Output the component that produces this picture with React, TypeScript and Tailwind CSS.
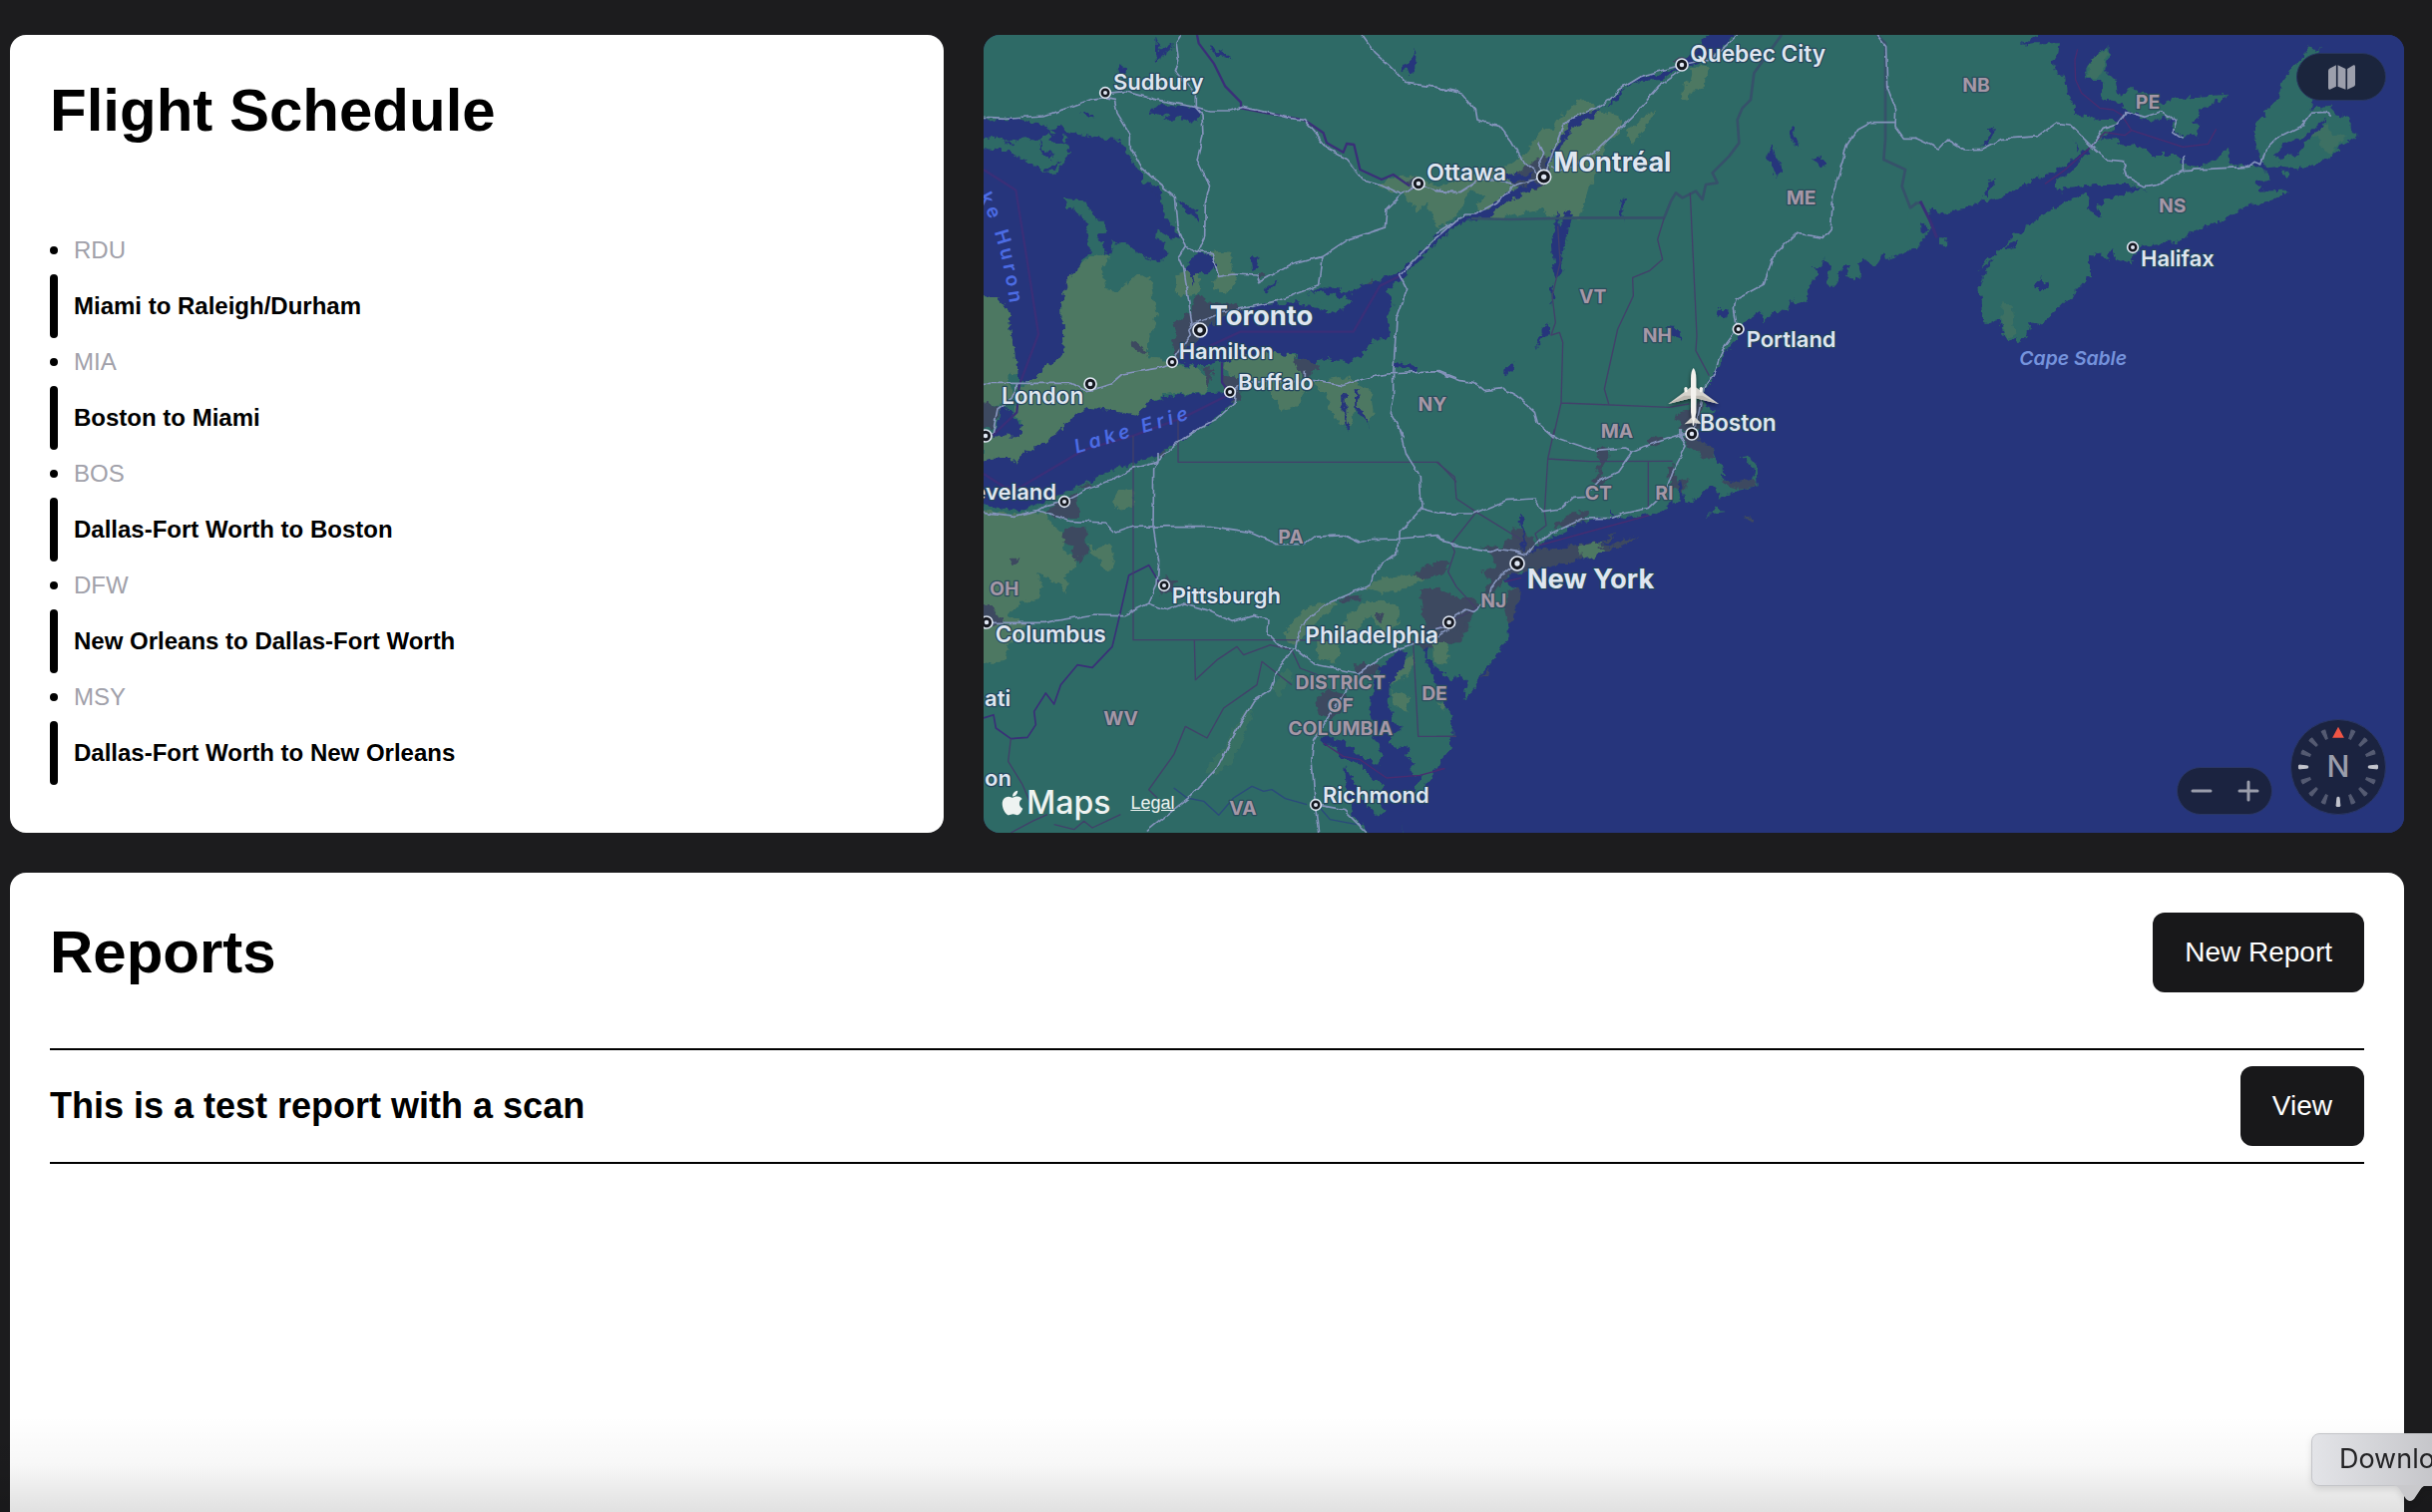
import React from "react";
import { FaApple } from "react-icons/fa";

const legs = [
  { code: "RDU", route: "Miami to Raleigh/Durham" },
  { code: "MIA", route: "Boston to Miami" },
  { code: "BOS", route: "Dallas-Fort Worth to Boston" },
  { code: "DFW", route: "New Orleans to Dallas-Fort Worth" },
  { code: "MSY", route: "Dallas-Fort Worth to New Orleans" },
];

const LAND = "#2e6a66";
const WATER = "#27367b";
const FARM = "#4e7862";
const URBAN = "#3c4a60";

/* The map is drawn in tiles; each tile has its own origin in map units (3 units = 1px). */
const NW = "translate(-18 -15)";
const N = "translate(1362 -15)";
const NE = "translate(2802 -15)";
const SW = "translate(-18 1185)";
const S = "translate(1362 1185)";

function Terrain() {
  return (
    <g filter="url(#coast)">
      <rect x="-60" y="-60" width="4400" height="2520" fill={LAND} />
      <g transform={NW}>
        <path fill={WATER} d="M-40 268 L120 268 L180 280 L215 300 L250 290 L275 310 L330 320 L360 325 L425 330 L440 350 L455 375 L470 410 L495 430 L495 460 L545 470 L550 495 L565 560 L590 590 L610 630 L580 625 L545 605 L540 630 L562 640 L565 680 L545 698 L500 680 L470 660 L445 640 L410 640 L398 675 L385 665 L365 620 L385 600 L380 575 L360 575 L335 540 L325 515 L258 505 L275 530 L320 565 L335 625 L335 670 L310 710 L280 740 L278 780 L255 800 L260 965 L240 990 L205 1010 L190 1030 L160 1055 L130 1055 L115 1030 L100 900 L95 860 L80 830 L60 808 L-40 800 Z" />
        <path fill={LAND} d="M-40 330 L60 320 L75 335 L100 335 L150 322 L165 335 L210 310 L225 340 L250 338 L275 345 L280 375 L260 395 L238 432 L205 425 L150 395 L100 370 L60 358 L-40 350Z M210 296 L240 312 L228 320Z M250 318 L270 322 L262 338Z" />
        <path fill={WATER} d="M185 330 L200 360 L230 375 L222 390 L195 380Z M205 420 L250 390 L240 410 L215 425Z M80 340 L115 345 L100 352Z" />
        <path fill={FARM} d="M-40 800 L60 808 L80 830 L95 860 L100 900 L115 1030 L90 1060 L110 1100 L60 1130 L-40 1120Z" />
        <path fill={FARM} d="M345 680 L385 668 L398 680 L375 720 L385 780 L420 785 L455 760 L475 735 L520 745 L530 820 L540 850 L530 900 L510 930 L510 985 L560 990 L600 1010 L660 1015 L700 1060 L695 1088 L560 1098 L510 1120 L480 1160 L400 1145 L330 1140 L285 1165 L220 1235 L200 1245 L160 1260 L125 1285 L115 1315 L105 1290 L70 1290 L18 1305 L18 1235 L60 1200 L130 1215 L135 1185 L110 1160 L125 1080 L160 1055 L190 1030 L205 1010 L240 990 L260 965 L255 800 L280 740 L310 710Z" />
        <path fill={LAND} d="M95 1025 L115 1060 L90 1055Z" />
        <path fill={WATER} d="M70 1135 L105 1150 L110 1175 L135 1185 L130 1225 L80 1215 L45 1230 L60 1190Z" />
        <path fill={URBAN} d="M-20 1115 L70 1135 L50 1200 L-20 1200Z M457 945 L475 935 L515 975 L490 970Z" />
        <path fill={WATER} d="M600 1000 L600 985 L640 950 L690 900 L720 865 L800 845 L850 825 L960 820 L1000 830 L1080 855 L1110 800 L1160 765 L1270 730 L1330 670 L1440 570 L1450 580 L1330 690 L1280 745 L1230 790 L1255 820 L1230 850 L1240 920 L1190 935 L1150 980 L1110 1000 L1050 990 L1000 1005 L950 975 L850 970 L790 985 L700 1010 L640 1012 Z" />
        <path fill={LAND} d="M1000 815 L1060 800 L1100 800 L1125 820 L1075 852 L1050 830Z" />
        <path fill={WATER} d="M985 795 L1040 775 L1080 778 L1125 795 L1090 805 L1040 785Z M860 785 L905 750 L905 762 L865 792Z M825 675 L850 690 L830 725 L826 700Z" />
        <path fill={URBAN} d="M655 795 L690 820 L780 830 L800 845 L720 865 L690 900 L640 950 L600 990 L580 960 L600 920 L590 880 L640 855Z M850 735 L865 735 L845 755Z M1160 760 L1185 750 L1185 762Z" />
        <path fill={FARM} d="M740 1000 L790 985 L850 970 L940 975 L960 1000 L980 1050 L990 1080 L960 1130 L915 1145 L890 1110 L860 1060 L760 1040 L735 1020Z M1000 1060 L1110 1045 L1180 1080 L1190 1150 L1170 1190 L1140 1130 L1120 1185 L1085 1180 L1055 1130 L1050 1095Z" />
        <path fill={URBAN} d="M950 985 L1020 1000 L1025 1020 L990 1045 L960 1020Z M735 1040 L790 1045 L790 1110 L760 1125 L740 1080Z M680 1015 L710 1020 L695 1082Z" />
        <path fill={WATER} d="M1098 1090 L1110 1090 L1108 1150 L1118 1205 L1108 1195 L1100 1150Z M1136 1075 L1148 1080 L1146 1130 L1180 1190 L1165 1180 L1138 1135Z M1250 998 L1320 1008 L1318 1022 L1260 1015Z" />
        <path fill={FARM} d="M598 735 L640 720 L665 740 L670 790 L600 805Z M700 665 L760 675 L765 720 L780 750 L750 790 L710 780 L715 720Z" />
        <path fill={WATER} d="M620 720 L665 670 L700 675 L715 710 L690 735 L655 735 L650 765 L640 735Z M515 250 L545 222 L600 230 L665 235 L672 262 L640 280 L610 262 L560 275 L575 258Z M415 120 L430 106 L452 120 L440 137Z M535 25 L552 60 L595 45 L558 72 L540 100Z M695 50 L740 65 L762 88 L720 75Z M305 245 L330 242 L352 262 L325 258Z M1265 125 L1290 95 L1305 90 L1318 55 L1318 120 L1300 145 L1292 115Z M600 505 L630 520 L645 540 L670 560 L672 580 L635 555 L610 525Z M525 465 L550 470 L545 510 L530 485Z" />
        <path fill={WATER} d="M220 1232 L285 1165 L330 1140 L400 1145 L480 1160 L510 1120 L560 1105 L640 1095 L700 1092 L750 1090 L775 1110 L770 1125 L700 1180 L640 1220 L560 1265 L520 1290 L450 1305 L330 1360 L250 1395 L175 1432 L120 1445 L50 1435 L-40 1425 L-40 1305 L70 1290 L105 1290 L115 1315 L125 1285 L160 1260 L200 1245Z" />
      </g>

      <g transform={N}>
        <path fill={FARM} d="M-180 470 L-120 440 L-60 440 L0 470 L70 450 L130 430 L160 420 L230 400 L270 370 L320 290 L350 300 L365 270 L440 205 L480 240 L565 265 L550 310 L510 340 L490 400 L460 470 L430 570 L400 550 L370 570 L345 565 L320 540 L170 570 L115 530 L150 500 L100 480 L80 530 L60 560 L0 598 L-10 560 L-30 520 L-60 545 L-90 500 Z M730 185 L760 155 L770 110 L820 115 L800 180 L768 182 L758 215Z M570 300 L660 240 L620 310 L588 345Z" />
        <path fill={URBAN} d="M240 430 L310 380 L340 390 L345 450 L300 480 L240 475 L215 450Z M705 95 L740 80 L770 95 L750 120Z M-90 455 L-60 440 L-45 465 L-70 485Z" />
        <path fill={WATER} d="M835 0 L910 0 L860 55 L790 100 L735 112 L680 150 L620 152 L570 175 L550 210 L500 230 L470 262 L400 300 L390 340 L355 375 L335 410 L330 400 L360 350 L390 300 L420 260 L490 238 L555 190 L580 165 L620 140 L700 125 L760 80Z" />
        <path fill={WATER} d="M-10 622 L80 565 L150 540 L200 500 L240 480 L290 455 L320 465 L260 495 L210 515 L160 565 L90 572 L-10 628Z M200 425 L250 440 L300 425 L290 440 L240 460 L200 450Z" />
        <path fill={WATER} d="M365 540 L372 590 L390 545 L405 550 L395 600 L390 640 L375 680 L382 720 L365 750 L355 740 L345 650 L355 600Z M350 760 L356 780 L348 825 L343 800Z M560 502 L570 505 L558 545 L566 578 L552 550Z M340 875 L335 910 L298 958 L315 910Z M232 1000 L225 1030 L205 1042 L205 1022Z M1062 290 L1072 295 L1092 352 L1072 345Z M1010 345 L1020 380 L1040 415 L1022 448 L1008 410 L990 385Z M1130 382 L1160 388 L1170 412 L1150 405Z M845 840 L872 840 L868 868 L850 862Z M690 890 L725 895 L742 930 L712 920Z M543 1180 L552 1180 L548 1210Z" />
        <path fill={WATER} d="M1460 640 L1420 665 L1350 690 L1345 670 L1320 712 L1280 690 L1265 705 L1275 740 L1250 755 L1235 735 L1245 705 L1220 705 L1210 735 L1200 770 L1180 770 L1180 740 L1185 712 L1170 685 L1160 710 L1130 712 L1150 740 L1120 770 L1115 815 L1085 825 L1065 810 L1055 850 L1020 845 L985 880 L975 850 L920 880 L910 920 L885 950 L860 980 L845 1020 L820 1060 L800 1090 L810 1130 L845 1145 L800 1160 L785 1200 L775 1240 L1480 1240 L1480 620Z" />
      </g>

      <g transform={NE}>
        <rect x="-10" y="-40" width="1560" height="2540" fill={WATER} />
        <path fill={LAND} d="M-20 -40 L440 -40 L365 15 L320 45 L350 40 L435 40 L430 70 L415 95 L425 130 L450 140 L455 190 L480 230 L480 255 L520 258 L560 270 L605 270 L600 300 L560 330 L600 325 L620 345 L690 355 L700 375 L780 375 L805 400 L860 410 L900 390 L945 350 L950 405 L1000 410 L1035 405 L1070 445 L1025 460 L1035 485 L1110 482 L1115 490 L1080 510 L1000 530 L930 570 L830 605 L790 635 L740 640 L680 650 L660 680 L650 700 L600 690 L590 655 L575 690 L555 670 L525 680 L525 740 L480 790 L430 840 L380 885 L345 880 L335 920 L318 940 L300 925 L280 940 L262 900 L255 865 L220 885 L205 865 L200 810 L190 785 L205 735 L240 690 L185 725 L260 655 L300 615 L350 580 L410 538 L515 490 L520 540 L560 565 L550 530 L570 510 L640 490 L690 480 L640 465 L540 465 L450 475 L440 487 L418 475 L425 455 L475 420 L530 355 L500 370 L460 400 L430 420 L370 445 L300 480 L260 505 L225 515 L200 510 L150 540 L80 552 L40 535 L50 600 L0 655 L-20 660Z" />
        <path fill={LAND} d="M1170 80 L1185 50 L1200 60 L1218 50 L1200 80 L1200 180 L1190 240 L1250 230 L1260 255 L1310 265 L1310 300 L1325 322 L1280 345 L1250 385 L1165 417 L1100 410 L1060 415 L1040 395 L1020 320 L1022 290 L1060 240 L1085 210 L1110 150 L1145 100Z" />
        <path fill={LAND} d="M580 45 L582 85 L570 120 L600 150 L605 185 L625 200 L632 175 L665 175 L700 195 L740 225 L780 205 L935 195 L900 220 L850 240 L860 260 L830 270 L850 290 L850 320 L800 322 L775 300 L775 275 L745 260 L710 275 L640 245 L610 215 L560 208 L570 175 L555 150 L515 150 L510 130 L530 90Z M75 625 L92 625 L90 650 L75 640Z M1095 425 L1125 425 L1110 438Z" />
        <path fill={FARM} opacity="0.45" d="M262 820 L290 825 L298 910 L280 935 L262 890Z M1160 320 L1240 280 L1250 310 L1300 320 L1270 345 L1250 375 L1220 360 L1215 320Z M530 90 L575 60 L575 85 L555 140 L515 145Z" />
        <path fill={WATER} d="M1080 380 L1110 340 L1160 330 L1200 290 L1235 262 L1215 300 L1165 350 L1155 370 L1090 388Z M365 755 L380 748 L385 762 L405 758 L400 780 L365 780Z M195 350 L225 320 L222 300 L240 290 L235 325 L215 345Z M205 500 L215 465 L242 445 L225 480 L215 505Z M455 310 L490 345 L485 370 L495 355 L480 335Z M268 655 L310 628 L300 650 L275 665Z M18 580 L30 585 L40 605 L20 610Z" />
      </g>

      <g transform={SW}>
        <path fill={FARM} d="M-40 240 L50 250 L120 255 L200 248 L230 290 L262 320 L255 360 L300 390 L285 430 L262 440 L275 460 L262 500 L250 470 L180 430 L195 470 L180 510 L120 528 L95 560 L150 590 L95 650 L80 700 L30 705 L-40 690Z M405 220 L425 185 L465 175 L475 230 L430 250Z M330 340 L350 365 L400 345 L410 385 L400 425 L375 420 L370 390 L345 385Z" />
        <path fill={FARM} d="M925 620 L940 585 L970 560 L990 535 L1060 520 L1090 530 L1050 555 L1000 600 L960 650 L930 640Z M1160 480 L1200 455 L1300 440 L1350 440 L1300 475 L1220 500Z M1100 580 L1160 520 L1220 518 L1270 540 L1260 590 L1225 620 L1180 560 L1140 610 L1080 630Z M1020 640 L1080 635 L1095 680 L1070 705 L1025 690Z M1230 720 L1310 680 L1315 710 L1270 760 L1235 765Z M1245 790 L1300 805 L1290 850 L1250 830Z M1370 640 L1415 655 L1405 700 L1370 700Z M1380 820 L1410 830 L1400 845Z" />
        <path fill={FARM} opacity="0.35" d="M930 720 L950 740 L900 810 L890 780Z M700 1000 L740 960 L800 850 L830 830 L800 940 L740 1030 L690 1040Z" />
        <path fill={URBAN} d="M200 250 L300 190 L305 270 L250 270Z M-40 530 L45 535 L75 580 L50 595 L-40 600Z M262 300 L325 290 L325 340 L335 370 L315 400 L280 380 L290 355 L255 340Z M100 390 L128 388 L105 412Z M545 460 L560 438 L600 455 L590 485 L550 500Z M540 75 L565 65 L560 85Z M300 180 L340 160 L345 175Z M1015 820 L1050 785 L1110 800 L1100 845 L1060 875 L1025 855Z M1085 510 L1150 498 L1150 520 L1095 520Z M1310 440 L1350 410 L1415 400 L1410 430 L1360 450Z M1130 705 L1220 715 L1180 745 L1140 735Z M1340 560 L1360 510 L1400 490 L1480 520 L1480 600 L1420 650 L1350 660 L1310 640 L1345 610Z M1195 565 L1215 550 L1218 580Z" />
        <path fill={WATER} d="M1265 670 L1290 680 L1280 720 L1240 760 L1235 820 L1250 880 L1275 900 L1250 920 L1230 940 L1270 960 L1300 950 L1290 980 L1310 1000 L1300 1030 L1335 1050 L1300 1120 L1280 1150 L1270 1235 L1190 1235 L1130 1160 L1110 1100 L1105 1015 L1150 1090 L1165 1130 L1210 1170 L1230 1150 L1190 1100 L1220 1080 L1190 1050 L1150 1010 L1090 990 L1075 950 L1040 950 L1040 920 L1100 940 L1150 985 L1210 1010 L1215 970 L1190 920 L1180 850 L1190 770 L1210 720 L1240 690Z" />
      </g>

      <g transform={S}>
        <path fill={URBAN} d="M200 360 L240 300 L265 300 L300 350 L270 400 L250 430 L215 440 L170 500 L140 500 L160 460 L130 430 L175 420 L170 380 L130 350Z M470 165 L490 100 L480 65 L500 45 L520 60 L520 85 L500 110 L490 150 L530 145 L500 165Z M345 300 L390 262 L460 243 L455 270 L400 295Z M630 35 L650 20 L690 30 L640 52Z M745 0 L790 20 L830 55 L835 90 L800 85 L750 45Z M695 110 L720 105 L725 160 L755 150 L745 190 L700 170Z M-50 480 L0 480 L60 510 L110 510 L130 530 L105 570 L70 610 L75 640 L50 640 L60 600 L20 620 L-30 640Z M205 540 L220 480 L250 480 L245 530 L220 600Z M0 400 L40 400 L30 430 L0 450Z M715 -45 L760 -60 L800 -80 L790 0 L735 0Z" />
        <path fill={FARM} d="M-10 645 L25 645 L40 680 L30 710 L-10 700Z" />
        <path fill={WATER} d="M785 0 L790 35 L830 55 L840 95 L860 120 L862 150 L890 165 L940 155 L960 140 L950 105 L915 85 L940 82 L965 115 L968 175 L910 185 L880 195 L870 205 L840 205 L850 190 L828 168 L790 205 L765 220 L745 218 L740 180 L735 150 L728 170 L735 220 L720 230 L705 215 L690 245 L640 258 L560 268 L440 278 L330 335 L290 360 L275 385 L255 400 L260 435 L230 430 L200 460 L248 480 L245 530 L215 600 L215 640 L190 660 L180 685 L130 740 L110 790 L80 815 L90 765 L70 740 L45 755 L0 720 L-28 690 L-28 655 L-40 660 L-32 700 L0 770 L20 825 L50 860 L40 885 L55 900 L55 925 L38 930 L45 960 L10 1000 L0 1020 L-30 1070 L-70 1110 L-105 1150 L-108 1250 L1480 1250 L1480 0Z" />
        <path fill={WATER} d="M250 260 L256 262 L270 300 L268 340 L262 370 L255 365 L262 300 L248 278Z M525 240 L545 262 L530 264Z" />
        <path fill={URBAN} d="M250 400 L300 365 L430 348 L500 340 L540 308 L520 335 L500 345 L520 352 L560 335 L612 322 L570 345 L510 365 L430 392 L330 418 L260 432Z M922 268 L960 263 L955 282 L935 276Z M855 150 L890 162 L955 150 L966 175 L910 182 L870 172Z" />
        <path fill={FARM} d="M430 350 L500 342 L490 355 L508 365 L480 385 L443 395Z" />
        <path fill={LAND} d="M812 260 L845 230 L855 250 L870 252Z M925 88 L942 86 L962 118 L960 145 L950 115Z" />
        <path fill={URBAN} d="M130 750 L170 712 L150 740Z" />
      </g>
    </g>
  );
}

function Borders() {
  return (
    <g fill="none" strokeLinejoin="round">
      <g stroke="#3a2f78" strokeWidth="7">
        <path transform={NW} d="M18 420 L115 482 L150 700 L183 915 L125 1070 L118 1150 L45 1220 M660 15 L665 40 L710 100 L745 170 L792 218 L792 235 L870 250 L985 272 L1040 310 L1050 340 L1100 368 L1110 342 L1132 345 L1150 420 L1215 450 L1250 435 L1300 470 M700 950 L790 908 L1130 908 L1210 770 L1270 740 M735 1000 L735 1060 L760 1095 L620 1165 L470 1220" />
        <path transform={SW} d="M18 135 L80 175 L130 175 L290 80 L330 60 L470 20" />
        <path transform={SW} strokeWidth="5" d="M18 870 L48 860 L55 900 L100 932 L150 928 L175 890 L170 850 L205 795 L230 828 L250 770 L300 710 L345 718 L405 655 L430 550 L455 440 L515 410 L545 460" />
      </g>
      <g stroke="#36516a" strokeWidth="8">
        <path transform={N} d="M1038 15 L955 130 L945 210 L920 235 L905 270 L910 340 L880 380 L830 430 L845 460 L810 465 L800 510 L780 485 L740 505 L720 490 L705 515 L685 565 L440 565 L220 570 L105 567 M1325 15 L1350 40 L1350 330 L1345 390 L1410 420 L1400 470 L1425 535 L1445 520" />
      </g>
      <g stroke="#42406a" strokeWidth="4">
        <path transform={N} d="M763 490 L783 920 L780 965 L820 1040 M685 565 L665 630 L680 690 L640 725 L590 745 L592 800 L545 900 L525 990 L505 1080 L518 1125 M375 1122 L700 1135 L760 1125 M365 590 L372 700 L348 800 L358 880 L345 918 L370 910 L380 940 L375 1122 L350 1230" />
        <path transform={SW} d="M468 20 L468 635 L915 635 M603 -30 L603 100 L1385 100 L1440 160 M652 635 L655 755 L720 695 L780 655 L800 680 L880 650 L945 665 L970 720 L1050 750 M945 770 L855 700 L840 770 L740 840 L690 930 L625 895 L590 980 L515 1085 L540 1110 M915 635 L1310 640 L1325 925 L1440 925 M100 932 L92 1000 L135 1070 L165 1140 M230 1190 L290 1205 L320 1180 L345 1200 L430 1160 M100 1215 L165 1180 L210 1160" />
        <path transform={S} d="M0 100 L55 145 L60 210 L120 250 L262 338 M355 0 L335 90 L325 250 L330 290 L297 315 L310 350 M335 90 L460 98 L710 97 M637 97 L637 240 M120 250 L45 345 L55 370 L35 430 L60 475 L120 540 L60 570 L0 600 M0 925 L60 925" />
      </g>
      <g stroke="#4a2c70" strokeWidth="4">
        <path transform={NE} d="M488 58 L480 90 L482 150 L500 190 L555 235 L595 240 L620 255 L650 302 L805 352 L880 343 L905 298 M650 302 L630 317 L570 308 L530 350 L445 425 L390 463" />
        <path transform={NE} stroke="#36516a" strokeWidth="8" d="M0 522 L15 520" />
        <path transform={NE} stroke="#3a2f78" strokeWidth="9" d="M15 515 L45 575 L65 625" />
        <path transform={S} d="M310 350 L640 260 M205 460 L255 448 M0 1024 L25 1022" />
        <path transform={SW} d="M1040 945 L1100 985 L1150 995 L1230 1050 L1330 1042 L1405 1022" />
      </g>
      <g stroke="#2b4a7c" strokeWidth="4">
        <path transform={SW} d="M590 1080 L630 1110 L680 1120 L725 1162 L770 1110 L825 1075 L860 1090 L885 1085 L925 1112 L990 1130 M1030 1140 L1060 1175 L1140 1190" />
      </g>
    </g>
  );
}

function Roads() {
  return (
    <g fill="none" stroke="#8493bb" strokeWidth="5" strokeLinejoin="round" filter="url(#wander)">
      <rect x="-60" y="-60" width="4400" height="2520" stroke="none" />
      <path transform={NW} d="M18 262 L80 265 L200 258 L270 235 L345 208 L384 203 L412 208 L420 250 L460 315 L460 355 L495 418 L550 465 L592 500 L600 590 L625 650 L605 680 L620 715 L645 885 M384 190 L445 185 L500 200 L560 215 L655 232 L700 243 L760 243 L795 232 L870 247 L940 265 L985 272 L1010 300 L1055 360 L1110 390 L1160 450 L1215 465 L1275 495 L1325 462 L1400 488 L1440 488 M610 15 L597 35 L605 95 L595 125 L655 195 L655 232 L675 255 L678 320 L660 390 L698 470 L685 520 L683 620 L662 668 L625 650 M662 668 L705 672 L725 742 L770 735 L840 738 L848 758 L900 730 L940 708 L1035 682 L1110 632 L1225 595 L1230 540 L1275 495 M1035 682 L1025 770 L900 815 L740 850 L645 885 L635 905 L640 920 L605 970 L585 1000 L540 1018 L435 1035 L400 1065 L330 1088 L280 1063 L130 1063 L18 1063 M120 1063 L100 1110 L60 1140 L45 1215 M1440 575 L1365 640 L1270 738 L1292 780 L1260 870 L1250 1035 L1250 1100 L1240 1150 L1285 1230 M1155 15 L1195 70 L1240 110 L1290 160 L1380 172 L1440 188 M780 1070 L870 1055 L1010 1055 L1100 1070 L1160 1050 L1230 1035 L1390 1028 L1440 1048 M780 1070 L775 1120 L720 1170 L670 1195 L620 1230 M985 1025 L985 1050" />
      <path transform={N} d="M0 172 L70 187 L115 240 L120 270 L190 290 L225 335 L250 380 L305 435 L323 440 L380 290 L400 270 L500 225 L550 180 L615 140 L737 105 M345 410 L365 425 L410 410 L490 355 L590 260 L670 170 L737 122 M737 105 L830 85 L905 15 M323 440 L235 468 L180 520 L115 555 L90 555 L0 612 M0 485 L70 488 L130 450 L180 450 L235 468 M305 340 L320 370 L305 400 L320 430 M0 1028 L70 1055 L115 1060 L145 1085 L200 1078 L240 1100 L295 1150 L305 1185 L350 1225 M1325 15 L1352 50 L1355 170 L1382 240 L1380 290 L1405 325 L1445 325 M1380 278 L1305 278 L1265 300 L1235 345 L1205 450 L1190 500 L1183 600 L1165 625 L1080 612 L1015 675 L985 765 L900 810 L895 840 L905 900 L860 960 L840 1025 L805 1075 L775 1210" />
      <path transform={NE} d="M0 325 L70 357 L95 330 L145 360 L200 358 L260 328 L370 320 L425 280 L465 285 L530 350 L575 390 L625 395 L640 445 L690 470 L730 463 L805 422 L1000 412 L1020 397 L1040 405 L1055 360 L1090 325 L1160 290 L1190 250 L1235 247 L1247 260 M530 350 L565 298 L605 285 L635 245 L690 262 L740 245 L785 275 L775 305 L803 325 M805 422 L805 395 L813 380" />
      <path transform={SW} d="M665 0 L605 38 L535 98 L465 118 L400 155 L320 185 L260 215 L205 230 L180 245 L110 262 L18 250 M180 245 L280 278 L385 282 L415 312 L465 295 L600 293 L700 293 L815 310 L900 347 L980 347 L1010 325 L1100 320 L1145 342 L1180 332 L1270 330 L1385 320 L1400 338 L1440 348 M540 75 L540 98 L530 120 L528 290 L545 400 L540 470 L515 525 L440 560 L350 558 L200 583 L25 583 M515 525 L570 545 L620 525 L690 545 L765 580 L830 562 L873 573 L870 615 L910 655 L955 660 L1015 708 L1145 735 L1210 690 L1270 660 L1390 620 L1418 602 M955 660 L975 590 L1060 520 L1180 470 L1195 425 L1265 370 L1270 310 L1335 240 L1330 140 L1285 70 L1268 0 M1335 240 L1390 255 L1440 255 M950 660 L905 720 L880 790 L830 820 L800 870 L750 960 L720 1020 L640 1105 L510 1210 M1145 735 L1105 790 L1060 860 L1010 935 L1005 990 L1015 1130 L1025 1215 M1015 1130 L1100 1145 L1170 1215" />
      <path transform={S} d="M0 255 L110 255 L210 215 L295 210 L320 248 L375 240 L410 208 L445 205 L490 155 L545 130 L587 70 L565 60 L480 67 L430 50 L370 30 L320 0 M587 70 L640 48 L740 15 L768 15 M735 0 L735 20 L750 55 L710 130 L690 190 L640 238 L560 255 L530 268 L440 270 L340 318 L290 350 L272 378 L245 370 L190 362 L165 370 L50 352 L40 340 L0 325 M243 405 L195 440 L165 480 L155 515 L110 550 L90 543 L45 570 L38 595 L0 605" />
    </g>
  );
}

type City = { t: string; x: number; y: number; name: string; lx: number; ly: number; r?: number; size?: number };
const cities: City[] = [
  { t: NW, x: 384, y: 189, name: "Sudbury", lx: 408, ly: 181 },
  { t: NW, x: 1326, y: 462, name: "Ottawa", lx: 1350, ly: 452, r: 18, size: 70 },
  { t: NW, x: 669, y: 903, name: "Toronto", lx: 698, ly: 889, r: 21, size: 82 },
  { t: NW, x: 585, y: 999, name: "Hamilton", lx: 605, ly: 991 },
  { t: NW, x: 339, y: 1065, name: "London", lx: 72, ly: 1126, r: 18, size: 68 },
  { t: NW, x: 759, y: 1089, name: "Buffalo", lx: 783, ly: 1082 },
  { t: NW, x: 24, y: 1221, name: "", lx: 0, ly: 0, r: 18 },
  { t: N, x: 738, y: 105, name: "Quebec City", lx: 763, ly: 95, r: 18, size: 68 },
  { t: N, x: 323, y: 442, name: "Montréal", lx: 352, ly: 427, r: 21, size: 81 },
  { t: N, x: 908, y: 900, name: "Portland", lx: 932, ly: 955 },
  { t: N, x: 768, y: 1215, name: "Boston", lx: 792, ly: 1205, r: 18, size: 68 },
  { t: NE, x: 654, y: 654, name: "Halifax", lx: 678, ly: 711 },
  { t: SW, x: 261, y: 219, name: "Cleveland", lx: -80, ly: 213 },
  { t: SW, x: 561, y: 471, name: "Pittsburgh", lx: 584, ly: 525 },
  { t: SW, x: 27, y: 582, name: "Columbus", lx: 53, ly: 641, r: 18, size: 68 },
  { t: SW, x: 1418, y: 582, name: "Philadelphia", lx: 985, ly: 645, r: 18, size: 68 },
  { t: SW, x: 1017, y: 1131, name: "Richmond", lx: 1038, ly: 1125 },
  { t: S, x: 243, y: 405, name: "New York", lx: 272, ly: 480, r: 21, size: 82 },
];

const regions = [
  { t: N, x: 470, y: 823, name: "VT" },
  { t: N, x: 664, y: 938, name: "NH" },
  { t: N, x: 1097, y: 524, name: "ME" },
  { t: N, x: 543, y: 1226, name: "MA" },
  { t: NW, x: 1368, y: 1146, name: "NY" },
  { t: NE, x: 183, y: 186, name: "NB" },
  { t: NE, x: 699, y: 237, name: "PE" },
  { t: NE, x: 773, y: 549, name: "NS" },
  { t: SW, x: 80, y: 500, name: "OH" },
  { t: SW, x: 942, y: 345, name: "PA" },
  { t: SW, x: 431, y: 891, name: "WV" },
  { t: SW, x: 798, y: 1162, name: "VA" },
  { t: SW, x: 1374, y: 816, name: "DE" },
  { t: SW, x: 1091, y: 782, name: "DISTRICT" },
  { t: SW, x: 1091, y: 852, name: "OF" },
  { t: SW, x: 1091, y: 922, name: "COLUMBIA" },
  { t: S, x: 487, y: 212, name: "CT" },
  { t: S, x: 685, y: 213, name: "RI" },
  { t: S, x: 172, y: 537, name: "NJ" },
];

function Labels() {
  return (
    <g fontFamily="Inter, sans-serif" strokeLinejoin="round">
      <g fill="#a597a6" stroke="#2b4d5c" strokeWidth="7" fontSize="58" fontWeight="700" textAnchor="middle">
        {regions.map((r) => (
          <text key={r.name} transform={r.t} x={r.x} y={r.y} paintOrder="stroke">{r.name}</text>
        ))}
      </g>
      {cities.map((c, i) => {
        const r = c.r ?? 16;
        const big = (c.size ?? 0) > 80;
        return (
          <g key={i} transform={c.t}>
            <circle cx={c.x} cy={c.y} r={r} fill="#14171f" stroke="#dfe6f2" strokeWidth="5" />
            <circle cx={c.x} cy={c.y} r={r * 0.38} fill="#dfe6f2" />
            {c.name && (
              <text x={c.lx} y={c.ly} fontSize={c.size ?? 66} fontWeight={big ? 700 : 600} fill="#dfe6f0" stroke="#24455c" strokeWidth="7" paintOrder="stroke">
                {c.name}
              </text>
            )}
          </g>
        );
      })}
      <g fill="#dfe6f0" stroke="#24455c" strokeWidth="7" fontSize="66" fontWeight="600">
        <text transform={SW} x="21" y="833" paintOrder="stroke">ati</text>
        <text transform={SW} x="21" y="1073" paintOrder="stroke">on</text>
      </g>
      <text transform={NE} x="313" y="1009" fontSize="58" fontWeight="600" fontStyle="italic" fill="#7593dc">Cape Sable</text>
      <g fill="#4c6ce4" fontSize="58" fontWeight="600" letterSpacing="12">
        <path id="huron" d="M-4 478 C52 560 96 660 122 900" fill="none" transform={NW} />
        <text transform={NW}>
          <textPath href="#huron">ake Huron</textPath>
        </text>
        <text transform="translate(280 1259) rotate(-17)" fontStyle="italic">Lake Erie</text>
      </g>
    </g>
  );
}

function Plane() {
  return (
    <g transform={N}>
      <g filter="url(#shadow)">
        <path fill="#d6d3cd" d="M765 1075 L697 1125 L765 1108Z M780 1075 L849 1125 L780 1108Z M768 1165 L746 1186 L770 1182Z M777 1165 L799 1186 L775 1182Z" />
        <path fill="#f4f2ee" d="M745 1078 Q750 1070 755 1078 L754 1090 L746 1090Z M791 1078 Q796 1070 801 1078 L800 1090 L792 1090Z M773 1017 Q781 1026 781 1050 L781 1150 L774 1190 L771 1190 L765 1150 L765 1050 Q765 1026 773 1017Z" />
        <path fill="#bdb9b2" d="M697 1125 L745 1100 L765 1100 L765 1108Z M849 1125 L800 1100 L781 1100 L781 1108Z" />
      </g>
    </g>
  );
}

function Compass() {
  return (
    <button aria-label="Reset heading to north" className="size-24 rounded-full border border-[#2a3766] bg-[#1b2340]">
      <svg viewBox="-48 -48 96 96" className="size-full">
        {Array.from({ length: 16 }, (_, i) => {
          if (i === 0) return null;
          const major = i % 4 === 0;
          return (
            <path key={i} transform={`rotate(${i * 22.5})`} d="M-2 -40 Q0 -41 2 -40 L1 -31 L-1 -31Z" fill={major ? "#c3c5ce" : "#555b72"} stroke={major ? "#c3c5ce" : "#555b72"} strokeWidth="1" />
          );
        })}
        <path d="M0 -41 L6 -30 L-6 -30Z" fill="#f05545" />
        <text x="0" y="10" fontFamily="Inter, sans-serif" fontSize="31" fontWeight="500" textAnchor="middle" fill="#9a9dab">N</text>
      </svg>
    </button>
  );
}

function FlightMap() {
  return (
    <section aria-label="Map" className="relative col-span-3 overflow-hidden rounded-2xl bg-[#27367b]">
      <svg viewBox="0 0 4272 2400" preserveAspectRatio="xMidYMid slice" className="absolute inset-0 size-full">
        <defs>
          <filter id="coast" x="0" y="0" width="1" height="1">
            <feTurbulence type="fractalNoise" baseFrequency="0.045" numOctaves="3" seed="4" result="n" />
            <feDisplacementMap in="SourceGraphic" in2="n" scale="28" xChannelSelector="R" yChannelSelector="G" />
          </filter>
          <filter id="wander" x="0" y="0" width="1" height="1">
            <feTurbulence type="fractalNoise" baseFrequency="0.03" numOctaves="2" seed="9" result="n" />
            <feDisplacementMap in="SourceGraphic" in2="n" scale="16" xChannelSelector="R" yChannelSelector="G" />
          </filter>
          <filter id="shadow" x="-0.3" y="-0.3" width="1.6" height="1.6">
            <feDropShadow dx="0" dy="6" stdDeviation="7" floodColor="#000" floodOpacity="0.55" />
          </filter>
        </defs>
        <Terrain />
        <Borders />
        <Roads />
        <Plane />
        <Labels />
      </svg>
      <button aria-label="Map type" className="absolute top-[18px] right-[18px] flex h-12 w-[90px] items-center justify-center rounded-full border border-[#28365f] bg-[#1b253d]">
        <svg viewBox="0 0 82 76" className="h-[25px] w-[27px]" fill="#9c9fac">
          <path d="M5 11 L24 1 V66 L5 75 Q0 76 0 71 V18 Q0 13 5 11Z M29 1 L53 12 V75 L29 66Z M58 12 L77 1 Q82 0 82 5 V60 Q82 64 78 66 L58 75Z" />
        </svg>
      </button>
      <div className="absolute right-[18px] bottom-[18px] flex items-end gap-[18px]">
        <div className="flex h-12 w-24 items-center rounded-full border border-[#2a3766] bg-[#1b2340] text-[#9a9dab]">
          <button aria-label="Zoom out" className="flex h-full flex-1 items-center justify-center">
            <svg viewBox="0 0 22 22" className="size-[22px]" stroke="currentColor" strokeWidth="3" strokeLinecap="round"><path d="M2 11H20" /></svg>
          </button>
          <button aria-label="Zoom in" className="flex h-full flex-1 items-center justify-center">
            <svg viewBox="0 0 22 22" className="size-[22px]" stroke="currentColor" strokeWidth="3" strokeLinecap="round"><path d="M2 11H20M11 2V20" /></svg>
          </button>
        </div>
        <Compass />
      </div>
      <div className="absolute bottom-3 left-[18px] flex items-center gap-5 text-[#eef3f1]">
        <div className="flex items-center gap-[3px] font-[Inter,sans-serif] text-[32px] leading-[36px] font-medium">
          <FaApple className="h-7 w-[22px]" />
          <span>Maps</span>
        </div>
        <a href="#legal" className="text-[18px] leading-6 underline">Legal</a>
      </div>
    </section>
  );
}

const buttonClass = "h-20 rounded-xl bg-[#18181a] px-8 text-[28px] leading-8 text-white";

export default function App() {
  return (
    <div className="relative flex min-h-screen flex-col gap-10 overflow-hidden bg-[#1c1c1e] pt-[35px] pr-7 pl-[10px] font-['Liberation_Sans',Arial,sans-serif] text-black">
      <main className="contents">
        <div className="grid min-h-[800px] grid-cols-5 gap-10">
          <section className="col-span-2 rounded-2xl bg-white p-10">
            <h1 className="text-[60px] leading-[72px] font-bold">Flight Schedule</h1>
            <ul className="mt-20 text-2xl">
              {legs.map((leg) => (
                <li key={leg.code}>
                  <div className="flex h-12 items-center gap-4">
                    <span className="size-2 rounded-full bg-black" />
                    <span className="text-[#a1a1aa]">{leg.code}</span>
                  </div>
                  <div className="flex h-16 items-center gap-4">
                    <span className="h-full w-2 rounded-full bg-black" />
                    <span className="font-bold">{leg.route}</span>
                  </div>
                </li>
              ))}
            </ul>
          </section>
          <FlightMap />
        </div>
        <section className="flex-1 rounded-t-2xl bg-white p-10">
          <div className="flex items-center justify-between">
            <h1 className="text-[60px] leading-[72px] font-bold">Reports</h1>
            <button className={buttonClass}>New Report</button>
          </div>
          <ul className="mt-14 border-t-2 border-black">
            <li className="flex items-center justify-between border-b-2 border-black py-4">
              <h2 className="text-4xl font-bold">This is a test report with a scan</h2>
              <button className={buttonClass}>View</button>
            </li>
          </ul>
        </section>
      </main>
      <div className="pointer-events-none absolute inset-x-0 bottom-0 h-24 bg-linear-to-b from-transparent via-black/3 to-black/12" />
      <div role="tooltip" className="absolute right-[-77px] bottom-[26px] flex h-[53px] w-[198px] items-center justify-center rounded-lg border border-[#c3c4c8] bg-linear-to-r from-[#e3e4e8] to-[#b4b4b8] font-[Inter,sans-serif] text-[27px] text-[#232325] drop-shadow-md">
        Downloads
        <svg viewBox="0 0 36 17" className="absolute top-full left-1/2 h-[17px] w-9 -translate-x-1/2" fill="#c9c9cc">
          <path d="M0 0 Q5 0 8 5 L14 14 Q18 18 22 14 L28 5 Q31 0 36 0Z" />
        </svg>
      </div>
    </div>
  );
}
